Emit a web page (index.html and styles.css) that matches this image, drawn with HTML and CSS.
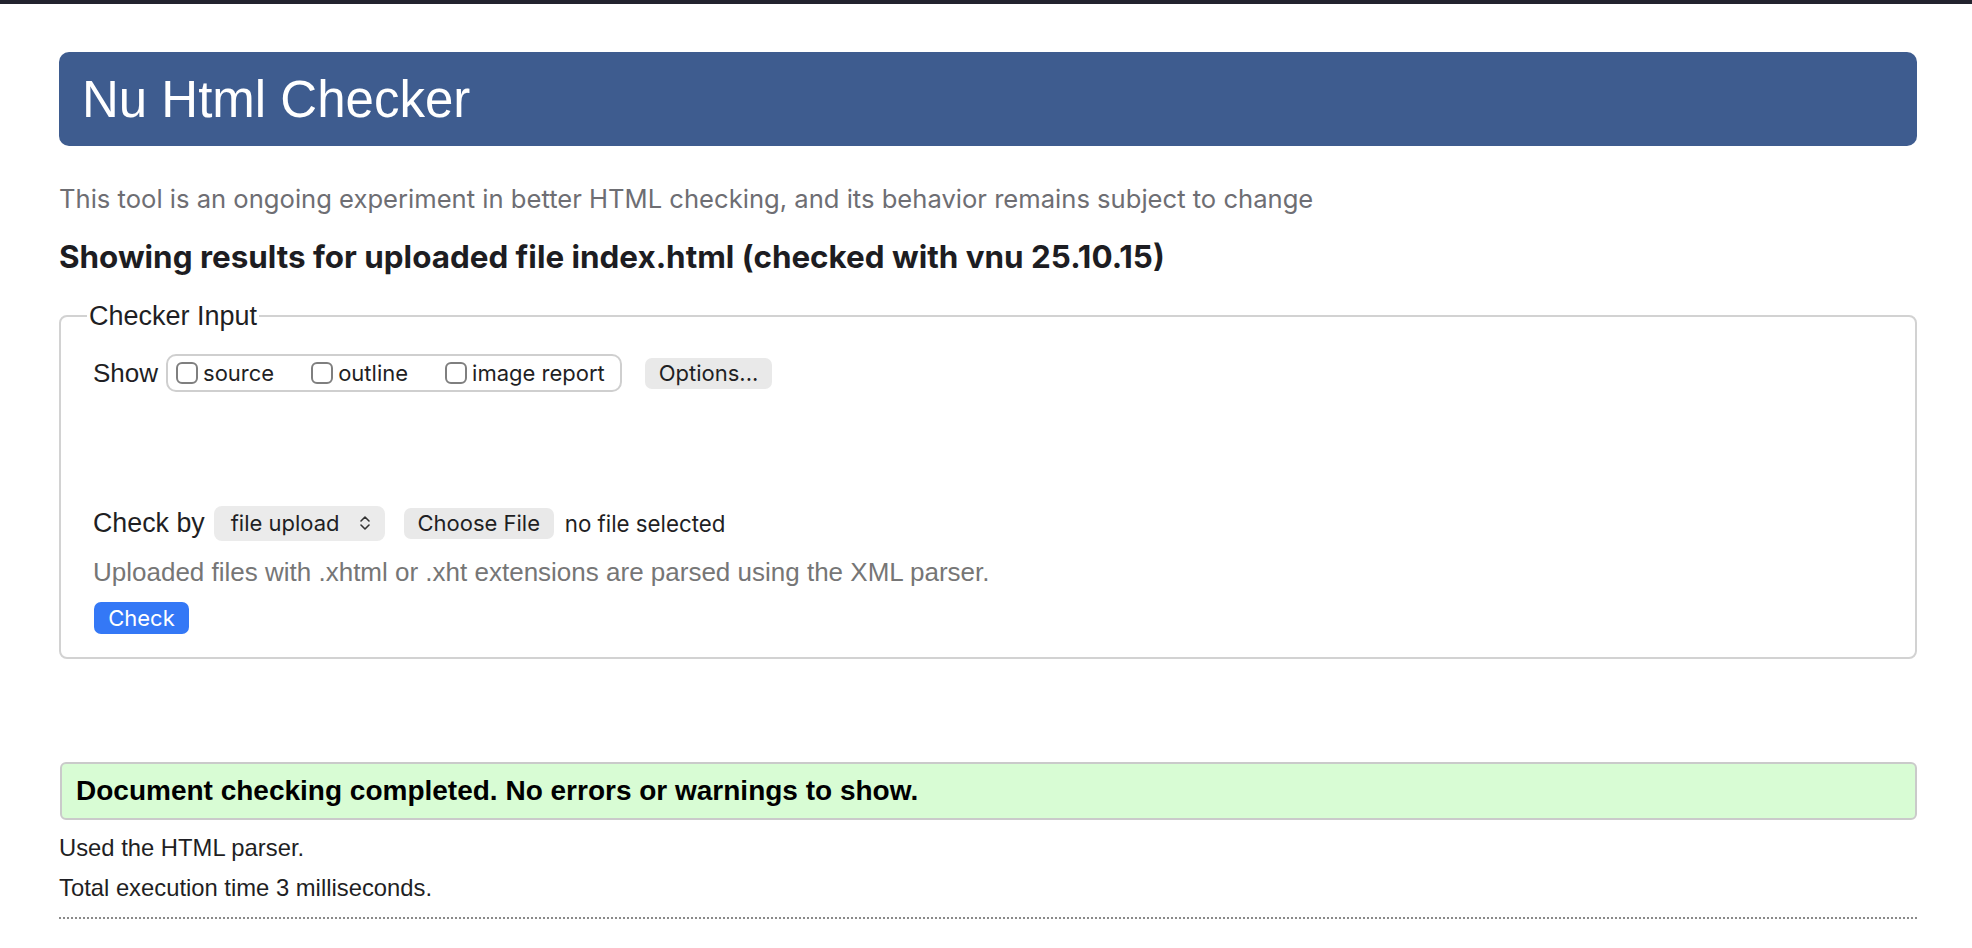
FILE: index.html
```html
<!DOCTYPE html>
<html lang="en">
<head>
<meta charset="utf-8">
<title>Nu Html Checker</title>
<link rel="stylesheet" href="styles.css">
</head>
<body>
<div class="topbar"></div>
<main class="page">
  <h1 class="banner">Nu Html Checker</h1>
  <p class="tagline">This tool is an ongoing experiment in better HTML checking, and its behavior remains subject to change</p>
  <h2 class="results-title">Showing results for uploaded file index.html (checked with vnu 25.10.15)</h2>
  <form class="checker">
    <fieldset class="input-set">
      <legend class="input-legend">Checker Input</legend>
      <div class="show-row">
        <span class="row-label">Show</span>
        <div class="show-group">
          <label class="opt"><span class="box"></span><span>source</span></label>
          <label class="opt"><span class="box"></span><span>outline</span></label>
          <label class="opt"><span class="box"></span><span>image report</span></label>
        </div>
        <span class="btn-gray options">Options...</span>
      </div>
      <div class="check-row">
        <span class="row-label">Check by</span>
        <span class="select">file upload
          <svg class="chev" width="14" height="20" viewBox="0 0 14 20"><path d="M3 8 L7 4 L11 8 M3 12 L7 16 L11 12" fill="none" stroke="#333" stroke-width="1.6" stroke-linecap="round" stroke-linejoin="round"/></svg>
        </span>
        <span class="btn-gray choose">Choose File</span>
        <span class="nofile">no file selected</span>
      </div>
      <p class="hint">Uploaded files with .xhtml or .xht extensions are parsed using the XML parser.</p>
      <span class="btn-check">Check</span>
    </fieldset>
  </form>
  <div class="success">Document checking completed. No errors or warnings to show.</div>
  <p class="meta first">Used the HTML parser.</p>
  <p class="meta">Total execution time 3 milliseconds.</p>
  <hr class="dotted">
</main>
</body>
</html>
```
FILE: styles.css
```css
body {
  margin: 0;
  background: #ffffff;
  color: #1f1f24;
  font-family: "Liberation Sans", Arial, sans-serif;
}

.topbar {
  height: 4px;
  background: #22232e;
}

.page {
  margin: 0 55px 0 59px;
  padding-top: 48px;
  padding-bottom: 40px;
}

.banner {
  margin: 0;
  height: 94px;
  box-sizing: border-box;
  display: flex;
  align-items: center;
  padding-left: 23px;
  background: #3e5c8f;
  color: #ffffff;
  border-radius: 10px;
  font-weight: normal;
  font-size: 51px;
}

.tagline {
  margin: 38px 0 0;
  font-family: Inter, "Liberation Sans", sans-serif;
  font-size: 25.6px;
  line-height: 30px;
  color: #6e6e73;
}

.results-title {
  margin: 26px 0 0;
  font-family: Inter, "Liberation Sans", sans-serif;
  font-size: 31.4px;
  font-weight: 700;
  line-height: 34px;
  color: #1d1d22;
}

.checker {
  margin: 28px 0 0;
}

.input-set {
  margin: 0;
  min-width: 0;
  border: 2px solid #d2d2d2;
  border-radius: 8px;
  padding: 0 30px 23px 32px;
}

.input-legend {
  padding: 0 2px;
  margin-left: -6px;
  font-size: 27px;
  line-height: 28px;
  color: #1f1f24;
}

.show-row {
  display: flex;
  align-items: center;
  height: 38px;
  margin-top: 24px;
}

.row-label {
  font-size: 26px;
  color: #1f1f24;
}

.check-row .row-label {
  font-size: 26.8px;
}

.show-group {
  display: flex;
  align-items: center;
  gap: 37px;
  height: 38px;
  width: 456px;
  box-sizing: border-box;
  margin-left: 8px;
  padding: 0 12px 0 8px;
  border: 2px solid #cfcfcf;
  border-radius: 10px;
}

.opt {
  display: flex;
  align-items: center;
  gap: 5px;
  font-family: Inter, "Liberation Sans", sans-serif;
  font-size: 22px;
  color: #1f1f24;
}

.box {
  width: 22px;
  height: 22px;
  box-sizing: border-box;
  border: 2px solid #7f7f7f;
  border-radius: 6px;
  background: #ffffff;
}

.btn-gray {
  display: inline-flex;
  align-items: center;
  justify-content: center;
  box-sizing: border-box;
  background: #e9e9e9;
  border-radius: 7px;
  font-family: Inter, "Liberation Sans", sans-serif;
  font-size: 22px;
  color: #1f1f24;
}

.options {
  width: 127px;
  height: 31px;
  margin-left: 23px;
}

.check-row {
  display: flex;
  align-items: center;
  height: 36px;
  margin-top: 113px;
}

.select {
  display: inline-flex;
  align-items: center;
  box-sizing: border-box;
  width: 171px;
  height: 35px;
  margin-left: 9px;
  padding-left: 17px;
  background: #ebebeb;
  border-radius: 8px;
  font-family: Inter, "Liberation Sans", sans-serif;
  font-size: 22px;
  color: #1f1f24;
}

.chev {
  margin-left: 18px;
}

.choose {
  width: 150px;
  height: 31px;
  margin-left: 19px;
}

.nofile {
  margin-left: 11px;
  font-family: Inter, "Liberation Sans", sans-serif;
  font-size: 22.3px;
  color: #1f1f24;
}

.hint {
  margin: 16px 0 0;
  font-size: 26px;
  line-height: 30px;
  color: #767676;
}

.btn-check {
  display: inline-flex;
  align-items: center;
  justify-content: center;
  width: 95px;
  height: 32px;
  margin: 15px 0 0 1px;
  background: #3478f6;
  color: #ffffff;
  border-radius: 7px;
  font-family: Inter, "Liberation Sans", sans-serif;
  font-size: 22px;
}

.success {
  display: flex;
  align-items: center;
  box-sizing: border-box;
  height: 58px;
  margin: 103px 0 0 1px;
  padding-left: 14px;
  background: #d8fcd4;
  border: 2px solid #cacaca;
  border-radius: 6px;
  font-size: 28px;
  font-weight: 700;
  color: #000000;
}

.meta {
  margin: 0;
  font-size: 23.8px;
  line-height: 40px;
  color: #1f1f24;
}

.meta.first {
  margin-top: 8px;
}

.dotted {
  margin: 9px 0 0;
  height: 0;
  border: 0;
  border-top: 2px dotted #8a8a8a;
}
```
